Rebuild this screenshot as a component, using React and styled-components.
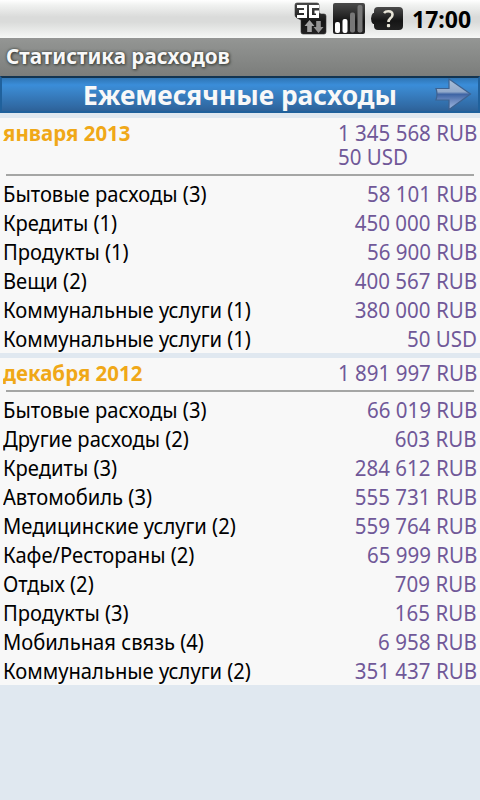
import React from 'react';
import styled, { createGlobalStyle } from 'styled-components';

const GlobalStyle = createGlobalStyle`
  * { box-sizing: border-box; }
  body { margin: 0; background: #e0e8f0; font-family: 'Noto Sans', 'Open Sans', sans-serif; overflow: hidden; }
`;

const Screen = styled.main`
  width: 480px;
  height: 800px;
  background: #e0e8f0;
  display: flex;
  flex-direction: column;
`;

const StatusBar = styled.header`
  height: 38px;
  flex: none;
  display: flex;
  align-items: center;
  justify-content: flex-end;
  padding-right: 9px;
  background: linear-gradient(#ffffff 0, #f1f2f1 5px, #dadbda 17px, #dadbda 22px, #f4f6f4 37px, #f7f8f7);
`;

const StatusIcon = styled.svg`
  flex: none;
  width: 38px;
  height: 38px;
`;

const Clock = styled.time`
  width: 59px;
  margin-left: 6px;
  font-size: 23px;
  line-height: 38px;
  font-weight: 700;
  color: #000;
  white-space: nowrap;
`;

const Condensed = styled.span`
  display: block;
  white-space: nowrap;
  transform: scaleX(${(p) => p.$scale});
  transform-origin: ${(p) => p.$origin || 'left'} center;
`;

const TitleBar = styled.h1`
  height: 38px;
  flex: none;
  margin: 0;
  padding-left: 6px;
  font-size: 21px;
  line-height: 36px;
  font-weight: 700;
  color: #f8f8f8;
  text-shadow: 0 0 3px #3c403c, 1px 1px 3px #3c403c;
  background: linear-gradient(#949694, #7b7d7b);
`;

const Banner = styled.div`
  height: 37px;
  flex: none;
  display: flex;
  align-items: center;
  border: 2px solid #20619c;
  border-top-color: #133450;
  background: linear-gradient(#2f75b4 0, #3a8dd9 7px, #3a86cc 12px, #3069a3 29px, #2d6198);
`;

const BannerTitle = styled.h2`
  flex: 1;
  margin: 0;
  padding-left: 43px;
  text-align: center;
  font-size: 27px;
  line-height: 33px;
  font-weight: 700;
  color: #f8f8f8;
`;

const NextButton = styled.button`
  display: flex;
  padding: 0;
  border: 0;
  background: none;
  margin-right: 6px;
`;

const MonthCard = styled.section`
  flex: none;
  margin-top: 5px;
  background: #f8f8f8;
`;

const MonthHeader = styled.div`
  display: flex;
  justify-content: space-between;
  padding: 2px 3px 6px;
  font-size: 22px;
  line-height: 24px;
`;

const MonthName = styled.h3`
  margin: 0;
  font-size: 22px;
  font-weight: 700;
  color: #f0a818;
`;

const Totals = styled.div`
  color: #705898;
  transform: scaleX(0.933);
  transform-origin: right center;
`;

const Divider = styled.hr`
  height: 2px;
  margin: 0 6px 3px;
  border: 0;
  background: #a5a6a5;
`;

const Row = styled.div`
  display: flex;
  justify-content: space-between;
  height: 29px;
  padding: 0 3px;
  font-size: 22px;
  line-height: 28px;
`;

const Category = styled(Condensed)`
  color: #000;
`;

const Amount = styled(Condensed)`
  color: #705898;
`;

const months = [
  {
    name: 'января 2013',
    totals: ['1 345 568 RUB', '50 USD'],
    rows: [
      ['Бытовые расходы (3)', '58 101 RUB'],
      ['Кредиты (1)', '450 000 RUB'],
      ['Продукты (1)', '56 900 RUB'],
      ['Вещи (2)', '400 567 RUB'],
      ['Коммунальные услуги (1)', '380 000 RUB'],
      ['Коммунальные услуги (1)', '50 USD'],
    ],
  },
  {
    name: 'декабря 2012',
    totals: ['1 891 997 RUB'],
    rows: [
      ['Бытовые расходы (3)', '66 019 RUB'],
      ['Другие расходы (2)', '603 RUB'],
      ['Кредиты (3)', '284 612 RUB'],
      ['Автомобиль (3)', '555 731 RUB'],
      ['Медицинские услуги (2)', '559 764 RUB'],
      ['Кафе/Рестораны (2)', '65 999 RUB'],
      ['Отдых (2)', '709 RUB'],
      ['Продукты (3)', '165 RUB'],
      ['Мобильная связь (4)', '6 958 RUB'],
      ['Коммунальные услуги (2)', '351 437 RUB'],
    ],
  },
];

const NetworkIcon = () => (
  <StatusIcon viewBox="0 0 38 38">
    <defs>
      <linearGradient id="dark" x1="0" y1="0" x2="0" y2="1">
        <stop offset="0" stopColor="#4b4b4b" />
        <stop offset=".6" stopColor="#151515" />
        <stop offset="1" stopColor="#222" />
      </linearGradient>
    </defs>
    <path d="M5 3H25Q27 3 27 5V13L29 14H32Q34 14 34 16V32Q34 34 32 34H11Q9 34 9 32V20L5 18Q3 17 3 15V5Q3 3 5 3Z" fill="url(#dark)" stroke="#333" strokeWidth=".6" />
    <path d="M5 6.500H13.500V16.500H5M7 11.500H13.500M27 6.500H18.500V16.500H25.500V12H22.500" fill="none" stroke="#fff" strokeWidth="3" />
    <path d="M17.500 20L22.500 26H19.800V32H15.200V26H12.500Z" fill="#a2a2a2" />
    <path d="M26.500 33L21.500 27H24.200V21H28.800V27H31.500Z" fill="#929292" />
  </StatusIcon>
);

const SignalIcon = () => (
  <StatusIcon viewBox="0 0 38 38">
    <rect x="3" y="3" width="32" height="31" rx="2" fill="url(#dark)" />
    <rect x="5" y="22" width="5" height="11" rx="2" fill="#fff" />
    <rect x="12.5" y="19" width="5" height="14" rx="2" fill="#fff" />
    <rect x="20" y="12.5" width="5" height="20" rx="2" fill="#777" />
    <rect x="27.5" y="5" width="5" height="27.500" rx="2" fill="#777" />
  </StatusIcon>
);

const BatteryIcon = () => (
  <StatusIcon viewBox="0 0 38 38">
    <path d="M10 7H31Q35 7 35 11V26Q35 30 31 30H10Q6 30 6 26V24H5Q3 22 3 18.500Q3 15 5 13H6V11Q6 7 10 7Z" fill="url(#dark)" />
    <path d="M16 13Q17.500 11.200 20.300 11.200Q24.500 11.200 24.500 14.700Q24.500 16.700 22.200 18.500Q20.500 20 20.500 22" fill="none" stroke="#e8e5d8" strokeWidth="2.600" />
    <rect x="18.900" y="24" width="3.200" height="3.200" rx="1" fill="#e8e5d8" />
  </StatusIcon>
);

const ArrowIcon = () => (
  <svg width="37" height="33" viewBox="0 0 37 33">
    <defs>
      <linearGradient id="arrow" x1="0" y1="0" x2="0" y2="1">
        <stop offset="0" stopColor="#a9bfd8" />
        <stop offset=".42" stopColor="#93aacb" />
        <stop offset=".5" stopColor="#3e64a4" />
        <stop offset=".7" stopColor="#6b89bf" />
        <stop offset="1" stopColor="#a0b8e0" />
      </linearGradient>
    </defs>
    <path d="M1 10.500H14V1L35.500 16L14 31.500V22H1Q3 16 1 10.500Z" fill="url(#arrow)" stroke="#3d6290" strokeWidth="1.200" />
  </svg>
);

export default function App() {
  return (
    <>
      <GlobalStyle />
      <Screen>
        <StatusBar>
          <NetworkIcon />
          <SignalIcon />
          <BatteryIcon />
          <Clock>17:00</Clock>
        </StatusBar>
        <TitleBar>
          <Condensed $scale={0.983}>Статистика расходов</Condensed>
        </TitleBar>
        <Banner>
          <BannerTitle>
            <Condensed $scale={0.975} $origin="center">Ежемесячные расходы</Condensed>
          </BannerTitle>
          <NextButton aria-label="Далее"><ArrowIcon /></NextButton>
        </Banner>
        {months.map((month) => (
          <MonthCard key={month.name}>
            <MonthHeader>
              <MonthName>
                <Condensed $scale={0.93}>{month.name}</Condensed>
              </MonthName>
              <Totals>
                {month.totals.map((total) => <div key={total}>{total}</div>)}
              </Totals>
            </MonthHeader>
            <Divider />
            {month.rows.map(([category, amount]) => (
              <Row key={category + amount}>
                <Category $scale={0.917}>{category}</Category>
                <Amount $scale={0.933} $origin="right">{amount}</Amount>
              </Row>
            ))}
          </MonthCard>
        ))}
      </Screen>
    </>
  );
}
